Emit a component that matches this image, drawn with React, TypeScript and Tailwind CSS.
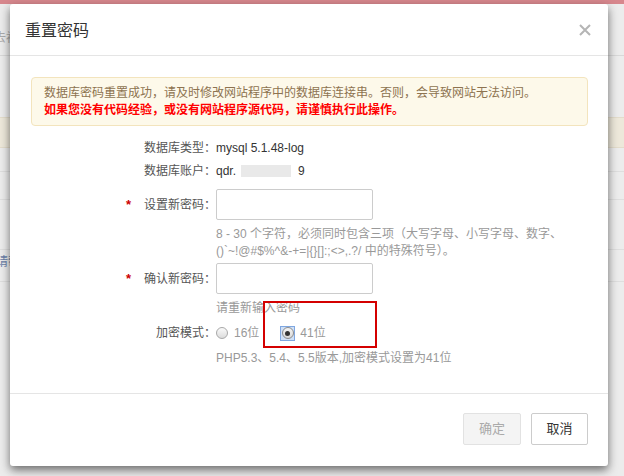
import React from "react";

const font = { fontFamily: '"Liberation Sans", "Noto Sans CJK SC", sans-serif' };

function Radio({ checked }: { checked?: boolean }) {
  if (checked) {
    return (
      <span className="inline-flex items-center justify-center w-[15px] h-[15px] bg-[#cfe0f7] border border-[#7fa7e0] mr-[5px]">
        <span className="inline-flex items-center justify-center w-[12px] h-[12px] rounded-full border border-[#8c8c8c] bg-gradient-to-b from-[#f4f4f4] to-[#d8d8d8]">
          <span className="w-[5px] h-[5px] rounded-full bg-[#333]" />
        </span>
      </span>
    );
  }
  return (
    <span className="inline-block w-[12px] h-[12px] rounded-full border border-[#a8a8a8] bg-gradient-to-b from-[#fafafa] to-[#dcdcdc] mr-[6px]" />
  );
}

function Label({ text, required }: { text: string; required?: boolean }) {
  return (
    <div className="w-[185px] shrink-0 flex items-center justify-end text-[#555]">
      {required && <span className="text-[#c00] mr-[13px] text-[13px] font-bold">*</span>}
      <span>{text}</span>
    </div>
  );
}

export default function App() {
  return (
    <div className="relative w-[624px] h-[476px] overflow-hidden bg-[#ececec] text-[12px]" style={font}>
      {/* page behind the overlay */}
      <div className="flex flex-col">
        <div className="h-[4px] bg-[#d7878d]" />
        <div className="h-[23px]" />
        <div className="h-[29px] border-b border-[#d8d8d8] text-[#aaa] pl-[0px]">
          <span className="relative -left-[6px] top-[2px]">去初</span>
        </div>
        <div className="h-[61px]" />
        <div className="h-[31px] bg-[#ede8da] border-y border-[#e3dccb]" />
        <div className="h-[24px] border-b border-[#dedede]" />
        <div className="h-[28px] border-b border-[#dedede]" />
        <div className="h-[50px] border-b border-[#dedede]" />
        <div className="h-[24px] text-[#6a7fa8] flex items-center">
          <span className="relative -left-[4px]">请帮</span>
        </div>
        <div className="h-[8px] border-b border-[#dedede]" />
      </div>

      {/* dialog */}
      <div className="absolute left-[10px] top-[4px] w-[598px] h-[462px] bg-white rounded-[3px] shadow-[0_4px_10px_rgba(0,0,0,0.55)] flex flex-col">
        <div className="h-[52px] shrink-0 border-b border-[#e5e5e5] flex items-center justify-between pl-[15px] pr-[17px]">
          <h1 className="text-[16px] text-[#333] pt-[2px]">重置密码</h1>
          <svg width="12" height="12" viewBox="0 0 12 12" className="mt-[1px]">
            <path d="M1 1L11 11M11 1L1 11" stroke="#b5b5b5" strokeWidth="2" />
          </svg>
        </div>

        <div className="flex-1 relative pl-[21px] pr-[20px] pt-[21px]">
          <div className="h-[49px] bg-[#fdf9ea] border border-[#f3e4bd] rounded-[4px] pl-[12px] flex flex-col justify-center leading-[17px]">
            <div className="text-[#8d7350]">数据库密码重置成功，请及时修改网站程序中的数据库连接串。否则，会导致网站无法访问。</div>
            <div className="text-[#f00] font-bold">如果您没有代码经验，或没有网站程序源代码，请谨慎执行此操作。</div>
          </div>

          <div className="mt-[10px] flex h-[23px] items-center">
            <Label text="数据库类型：" />
            <span className="text-[#333]">mysql 5.1.48-log</span>
          </div>
          <div className="flex h-[23px] items-center">
            <Label text="数据库账户：" />
            <span className="text-[#333]">qdr.</span>
            <span className="w-[50px] h-[12px] bg-[#e9e9e9] ml-[5px]" />
            <span className="text-[#333] ml-[7px]">9</span>
          </div>

          <div className="mt-[7px] flex h-[31px] items-center">
            <Label text="设置新密码：" required />
            <input className="w-[157px] h-[31px] border border-[#ccc] rounded-[2px] outline-none" />
          </div>
          <div className="mt-[6px] pl-[185px] text-[#999] leading-[17px]">
            <div>8 - 30 个字符，必须同时包含三项（大写字母、小写字母、数字、</div>
            <div>()`~!@#$%^&amp;-+=|{"{}"}[]:;&lt;&gt;,.?/ 中的特殊符号）。</div>
          </div>

          <div className="mt-[3px] flex h-[31px] items-center">
            <Label text="确认新密码：" required />
            <input className="w-[157px] h-[31px] border border-[#ccc] rounded-[2px] outline-none" />
          </div>
          <div className="mt-[6px] pl-[185px] text-[#999] leading-[17px]">请重新输入密码</div>

          <div className="mt-[4px] flex h-[24px] items-center">
            <Label text="加密模式：" />
            <span className="flex items-center text-[#999]">
              <Radio />
              16位
            </span>
            <span className="flex items-center text-[#999] ml-[21px]">
              <Radio checked />
              41位
            </span>
          </div>
          <div className="mt-[5px] pl-[185px] text-[#999] leading-[17px]">PHP5.3、5.4、5.5版本,加密模式设置为41位</div>

          <div className="absolute left-[253px] top-[245px] w-[114px] h-[47px] border-2 border-[#d40000]" />
        </div>

        <div className="h-[73px] shrink-0 border-t border-[#e5e5e5] flex items-start justify-end gap-[10px] pt-[19px] pr-[20px]">
          <button className="h-[32px] w-[58px] bg-[#f4f4f4] border border-[#e2e2e2] rounded-[2px] text-[13px] text-[#aaa]">确定</button>
          <button className="h-[32px] w-[57px] bg-white border border-[#ccc] rounded-[2px] text-[13px] text-[#333]">取消</button>
        </div>
      </div>
    </div>
  );
}
